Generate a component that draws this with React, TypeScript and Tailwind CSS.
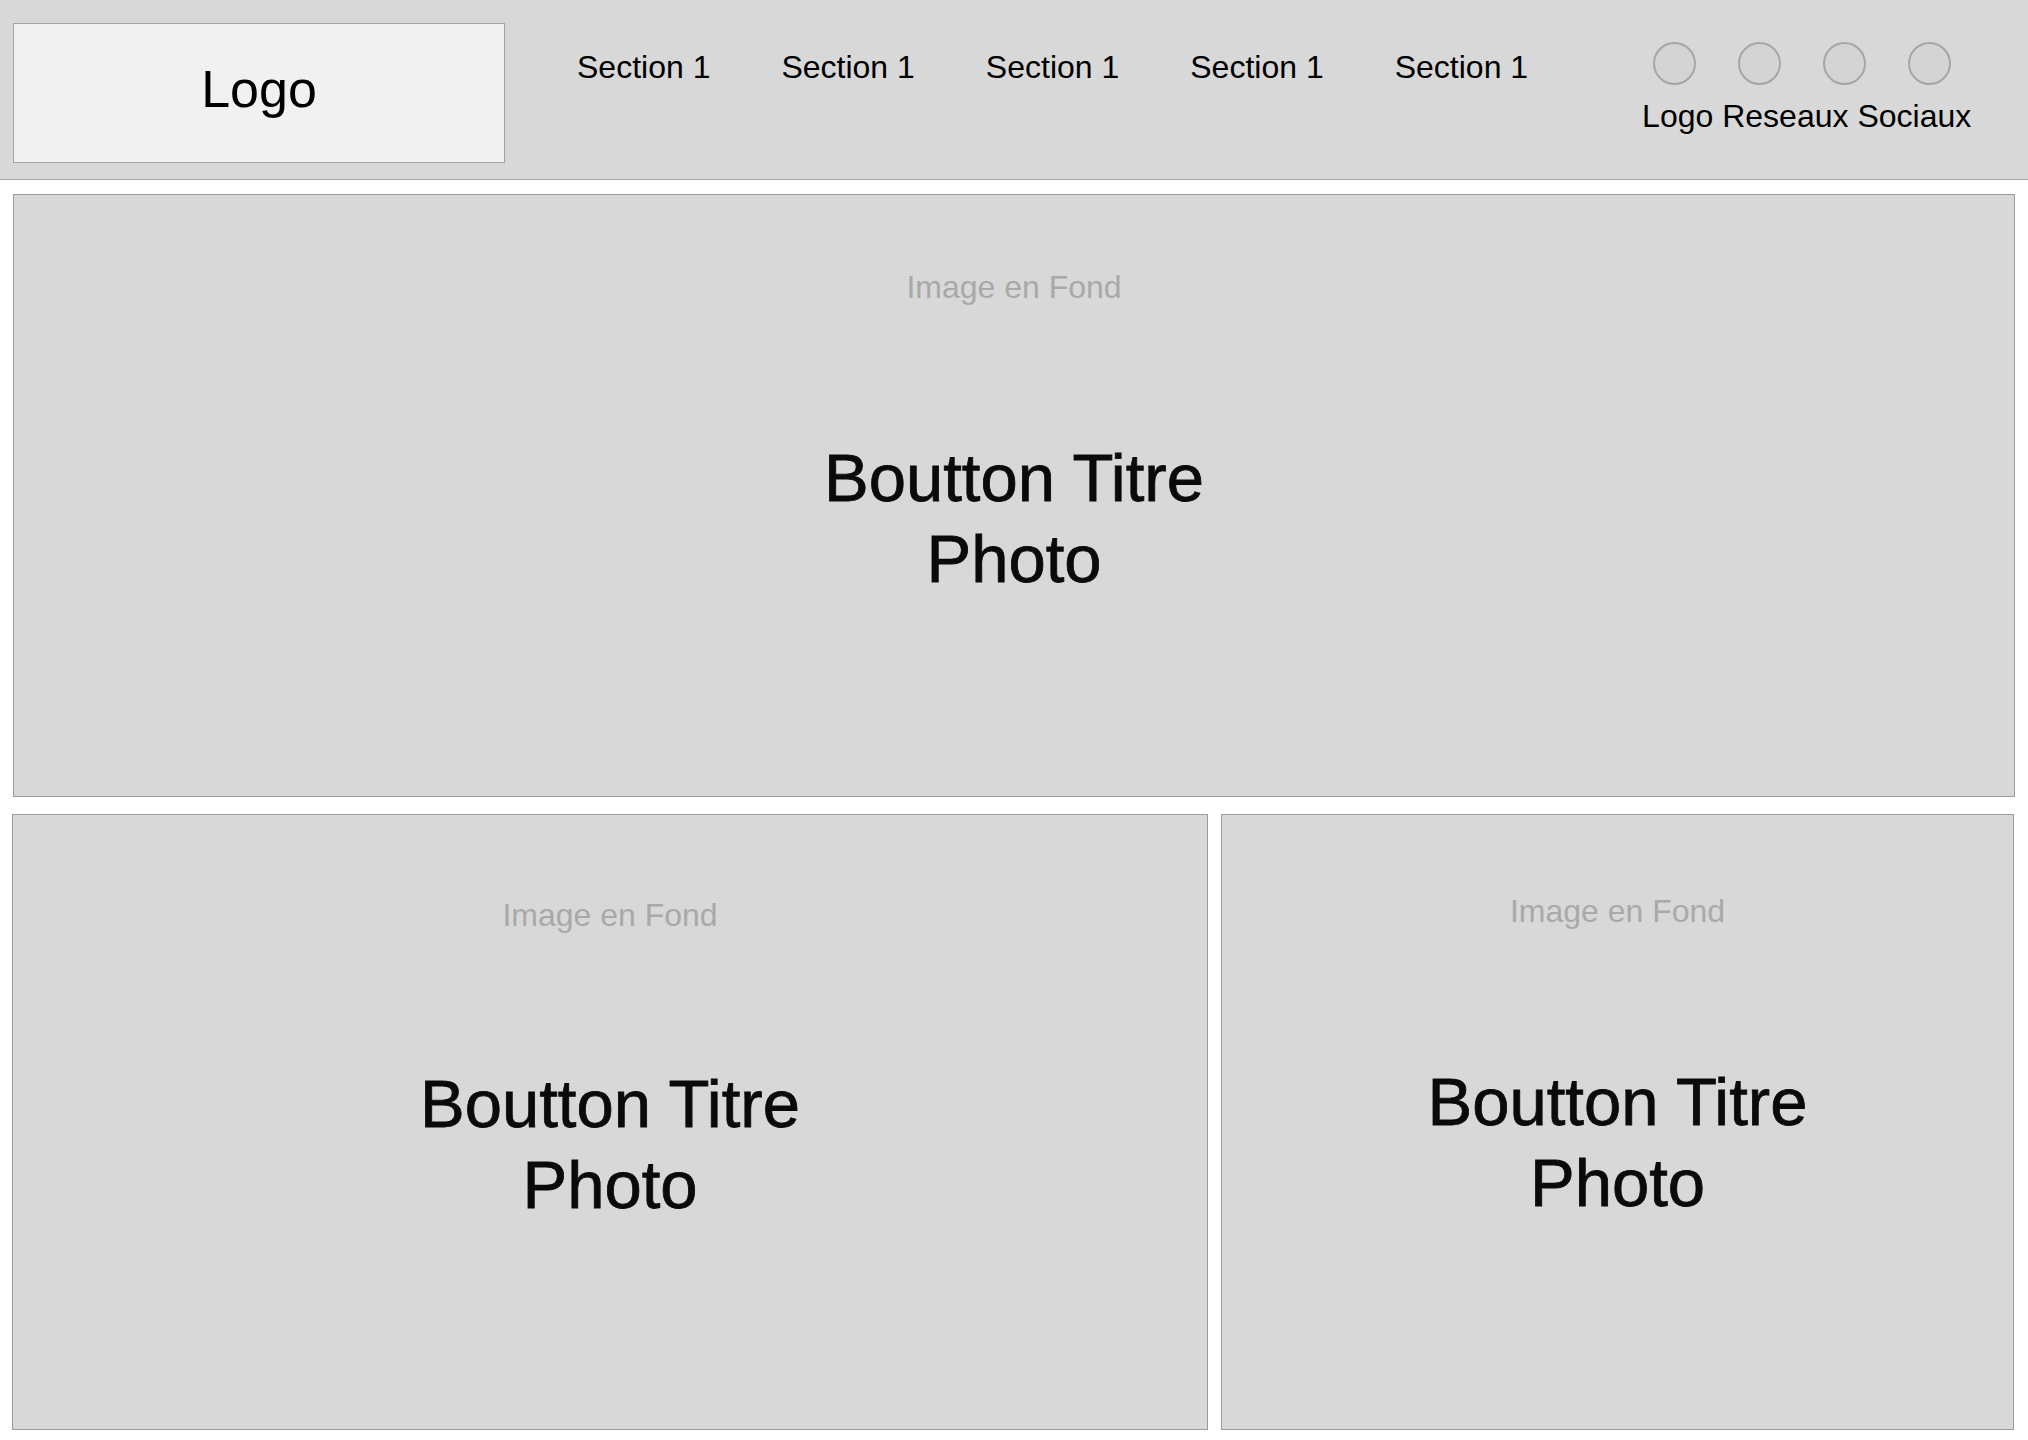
const sections = ['Section 1', 'Section 1', 'Section 1', 'Section 1', 'Section 1'];

function PhotoCard({ className, imageTop, titleGap }: { className: string; imageTop: string; titleGap: string }) {
  return (
    <div className={`flex flex-col items-center border border-[#9c9c9c] bg-[#d8d8d8] ${className} ${imageTop}`}>
      <p className="text-[32px] leading-[40px] text-[#a9a9a9]">Image en Fond</p>
      <h2 className={`${titleGap} text-center text-[67px] leading-[81px] text-[#0a0a0a] [-webkit-text-stroke:0.8px_#0a0a0a]`}>
        Boutton Titre
        <br />
        Photo
      </h2>
    </div>
  );
}

export default function App() {
  return (
    <div className="min-h-screen bg-white font-['Liberation_Sans',Arial,sans-serif]">
      {/* Header */}
      <header className="flex h-[180px] border-b border-[#a6a6a6] bg-[#d8d8d8] pl-[13px] pt-[23px]">
        <div className="flex h-[140px] w-[492px] items-center justify-center border border-[#a3a3a3] bg-[#f1f1f1] pb-[8px]">
          <span className="text-[52px] leading-none text-black">Logo</span>
        </div>

        <nav className="ml-[72px] mt-[26px] flex gap-[71px]">
          {sections.map((s, i) => (
            <a key={i} href="#" className="text-[32px] leading-[36px] text-black">
              {s}
            </a>
          ))}
        </nav>

        <div className="ml-[114px] flex flex-col items-start">
          <div className="ml-[11px] mt-[19px] flex gap-[42px]">
            {[0, 1, 2, 3].map((i) => (
              <div key={i} className="h-[43px] w-[43px] rounded-full border-2 border-[#a6a6a6] bg-[#d4d4d4]" />
            ))}
          </div>
          <p className="mt-[13px] text-[32px] leading-[36px] text-black">Logo Reseaux Sociaux</p>
        </div>
      </header>

      {/* Content */}
      <main className="flex flex-col px-[12px] pt-[14px]">
        <PhotoCard className="ml-[1px] h-[603px] w-[2002px]" imageTop="pt-[72px]" titleGap="mt-[130px]" />

        <div className="mt-[17px] flex gap-[13px]">
          <PhotoCard className="h-[616px] w-[1196px]" imageTop="pt-[80px]" titleGap="mt-[128px]" />
          <PhotoCard className="h-[616px] w-[793px]" imageTop="pt-[76px]" titleGap="mt-[130px]" />
        </div>
      </main>
    </div>
  );
}
